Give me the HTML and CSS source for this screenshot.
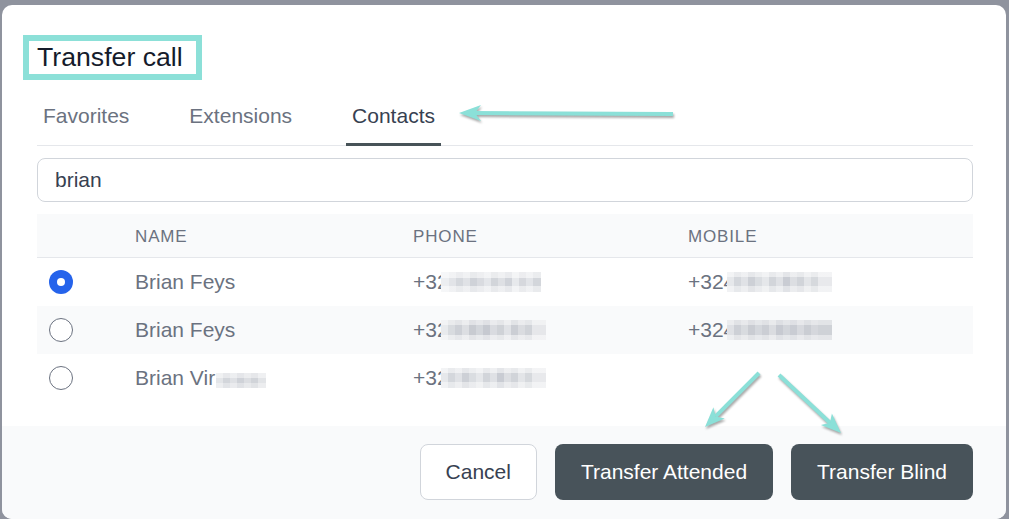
FILE: index.html
```html
<!DOCTYPE html>
<html lang="en">
<head>
<meta charset="utf-8">
<title>Transfer call</title>
<link rel="stylesheet" href="styles.css">
</head>
<body>
<div class="dialog">
  <div class="content">
    <h1 class="title">Transfer call</h1>
    <nav class="tabs">
      <span class="tab">Favorites</span>
      <span class="tab">Extensions</span>
      <span class="tab active">Contacts</span>
    </nav>
    <input class="search" type="text" value="brian">
    <div class="table">
      <div class="row head">
        <span class="cell"></span>
        <span class="cell">Name</span>
        <span class="cell">Phone</span>
        <span class="cell">Mobile</span>
      </div>
      <div class="row">
        <span class="cell"><span class="radio checked"></span></span>
        <span class="cell">Brian Feys</span>
        <span class="cell">+32<span class="blur blur-a"></span></span>
        <span class="cell">+324<span class="blur blur-b"></span></span>
      </div>
      <div class="row alt">
        <span class="cell"><span class="radio"></span></span>
        <span class="cell">Brian Feys</span>
        <span class="cell">+32<span class="blur blur-c"></span></span>
        <span class="cell">+324<span class="blur blur-d"></span></span>
      </div>
      <div class="row">
        <span class="cell"><span class="radio"></span></span>
        <span class="cell">Brian Vir<span class="blur blur-name"></span></span>
        <span class="cell">+32<span class="blur blur-b"></span></span>
        <span class="cell"></span>
      </div>
    </div>
  </div>
  <div class="footer">
    <button class="btn btn-light">Cancel</button>
    <button class="btn btn-dark">Transfer Attended</button>
    <button class="btn btn-dark">Transfer Blind</button>
  </div>
</div>

<svg class="annotations" width="1009" height="519" viewBox="0 0 1009 519">
  <g class="arrows">
    <line x1="673" y1="114" x2="474" y2="113" class="shaft"/>
    <polygon points="459,113 481,105 475,113 481,121" class="head"/>
    <line x1="759" y1="373" x2="715.6" y2="416.4" class="shaft"/>
    <polygon points="705,427 713.4,407.2 715.6,416.4 724.8,418.6" class="head"/>
    <line x1="779" y1="375" x2="830" y2="422.8" class="shaft"/>
    <polygon points="841,433 831.9,413.5 830,422.8 820.9,425.1" class="head"/>
  </g>
</svg>
</body>
</html>
```

FILE: styles.css
```css
html, body {
  margin: 0;
  padding: 0;
}

body {
  background: #8f939e;
  width: 1009px;
  height: 519px;
  overflow: hidden;
  position: relative;
  font-family: "Liberation Sans", Arial, sans-serif;
}

.dialog {
  margin: 5px 0 0 2px;
  width: 1004px;
  height: 514px;
  background: #ffffff;
  border-radius: 10px;
  display: flex;
  flex-direction: column;
  overflow: hidden;
}

.content {
  padding: 30px 33px 0 35px;
}

.title {
  display: inline-block;
  margin: 0 0 0 -14px;
  border: 6px solid #8ce0d8;
  padding: 0 13px 0 8px;
  height: 33px;
  font-size: 26.67px;
  line-height: 33px;
  font-weight: 400;
  color: #151b2b;
}

.tabs {
  display: flex;
  gap: 48px;
  margin-top: 8px;
  border-bottom: 1px solid #e5e7eb;
}

.tab {
  padding: 16px 6px 15px;
  font-size: 21px;
  line-height: 24px;
  color: #6b7280;
  border-bottom: 3px solid transparent;
  margin-bottom: -1px;
}

.tab.active {
  color: #374151;
  border-bottom-color: #475358;
}

.search {
  display: block;
  box-sizing: border-box;
  width: 100%;
  height: 44px;
  margin-top: 12px;
  padding: 0 17px;
  border: 1px solid #d1d5db;
  border-radius: 8px;
  font-family: "Liberation Sans", Arial, sans-serif;
  font-size: 21px;
  color: #374151;
  outline: none;
  background: #fff;
}

.table {
  margin-top: 12px;
  margin-bottom: 24px;
}

.row {
  display: grid;
  grid-template-columns: 98px 278px 275px 1fr;
  height: 48px;
  align-items: center;
}

.row.alt {
  background: #f9fafb;
}

.row.head {
  height: 43px;
  background: #f9fafb;
  border-bottom: 1px solid #e5e7eb;
}

.row.head .cell {
  padding-top: 2px;
  font-size: 17px;
  letter-spacing: 0.05em;
  text-transform: uppercase;
  color: #6b7280;
}

.cell {
  display: flex;
  align-items: center;
  font-size: 21px;
  color: #6b7280;
  white-space: nowrap;
}

.cell:first-child {
  padding-left: 12px;
}

.radio {
  box-sizing: border-box;
  width: 24px;
  height: 24px;
  border-radius: 50%;
  border: 1.5px solid #6b7280;
  background: #fff;
  display: flex;
  align-items: center;
  justify-content: center;
}

.radio.checked {
  border: none;
  background: #2563eb;
}

.radio.checked::after {
  content: "";
  width: 8px;
  height: 8px;
  border-radius: 50%;
  background: #fff;
}

.blur {
  display: inline-block;
  height: 20px;
  width: 100px;
  margin-left: -8px;
  background-color: #dcdee3;
}

.blur-a {
  background-image:
    linear-gradient(180deg, rgba(255,255,255,0.55) 0 6px, rgba(255,255,255,0) 6px 14px, rgba(255,255,255,0.5) 14px),
    linear-gradient(90deg, #eceef1 0 8px, #e2e4e8 8px 15px, #d5d8dd 15px 22px, #e0e2e6 22px 29px, #cfd2d8 29px 36px, #d9dbe0 36px 43px, #e4e6ea 43px 50px, #d2d5da 50px 57px, #dee0e4 57px 64px, #d0d3d9 64px 71px, #e7e9ec 71px 78px, #d6d8dd 78px 85px, #e2e4e8 85px 92px, #d3d6db 92px);
}

.blur-b {
  width: 105px;
  background-image:
    linear-gradient(180deg, rgba(255,255,255,0.5) 0 5px, rgba(255,255,255,0) 5px 14px, rgba(255,255,255,0.45) 14px),
    linear-gradient(90deg, #e6e8eb 0 7px, #d4d7dc 7px 14px, #e0e2e6 14px 21px, #cdd0d6 21px 28px, #dadde1 28px 35px, #e5e7ea 35px 42px, #d2d5da 42px 49px, #dfe1e5 49px 56px, #c9ccd3 56px 63px, #dcdee2 63px 70px, #d1d4d9 70px 77px, #e3e5e8 77px 84px, #d6d9dd 84px 91px, #e8e9ec 91px);
}

.blur-c {
  width: 105px;
  background-image:
    linear-gradient(180deg, rgba(255,255,255,0.45) 0 5px, rgba(255,255,255,0) 5px 15px, rgba(255,255,255,0.5) 15px),
    linear-gradient(90deg, #e8eaed 0 7px, #d8dbdf 7px 14px, #cdd0d6 14px 21px, #dcdee2 21px 28px, #c8cbd1 28px 35px, #d3d6db 35px 42px, #c6c9d0 42px 49px, #d9dbe0 49px 56px, #cfd2d7 56px 63px, #e0e2e6 63px 70px, #cbced4 70px 77px, #dadce0 77px 84px, #d0d3d8 84px 91px, #e6e7ea 91px);
}

.blur-d {
  width: 105px;
  background-image:
    linear-gradient(180deg, rgba(255,255,255,0.4) 0 5px, rgba(255,255,255,0) 5px 15px, rgba(255,255,255,0.45) 15px),
    linear-gradient(90deg, #dfe1e5 0 7px, #cdd0d6 7px 14px, #d8dbdf 14px 21px, #c9ccd2 21px 28px, #d4d7dc 28px 35px, #cbced4 35px 42px, #dadce0 42px 49px, #c7cad1 49px 56px, #d2d5da 56px 63px, #c9ccd3 63px 70px, #d7d9de 70px 77px, #cacdd3 77px 84px, #d5d7dc 84px 91px, #cfd2d7 91px);
}

.blur-name {
  width: 50px;
  height: 15px;
  margin-left: 1px;
  margin-top: 5px;
  background-image:
    linear-gradient(180deg, rgba(255,255,255,0.45) 0 5px, rgba(255,255,255,0) 5px 10px, rgba(255,255,255,0.35) 10px),
    linear-gradient(90deg, #e3e5e8 0 7px, #d3d6db 7px 14px, #dfe1e5 14px 21px, #cfd2d8 21px 28px, #dcdee2 28px 35px, #d1d4d9 35px 42px, #e2e4e7 42px);
}

.footer {
  margin-top: auto;
  flex: 1;
  background: #f9fafb;
  display: flex;
  justify-content: flex-end;
  align-items: flex-start;
  gap: 18px;
  padding: 18px 33px 0 0;
}

.btn {
  height: 56px;
  padding: 0 26px;
  border-radius: 8px;
  font-family: "Liberation Sans", Arial, sans-serif;
  font-size: 21px;
  cursor: pointer;
}

.btn-light {
  padding: 0 25px;
  background: #ffffff;
  border: 1px solid #d1d5db;
  color: #374151;
}

.btn-dark {
  background: #48535a;
  border: none;
  color: #ffffff;
}

.annotations {
  position: absolute;
  top: 0;
  left: 0;
  pointer-events: none;
}

.arrows {
  filter: drop-shadow(1.5px 2px 1px rgba(60, 60, 60, 0.45));
}

.shaft {
  stroke: #8be0d8;
  stroke-width: 4;
  stroke-linecap: butt;
}

.head {
  fill: #8be0d8;
}
```
